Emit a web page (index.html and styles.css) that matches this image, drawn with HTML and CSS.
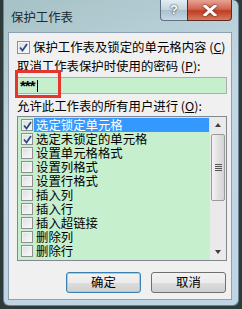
FILE: index.html
```html
<!DOCTYPE html>
<html>
<head>
    <meta charset="UTF-8">
    <title>保护工作表</title>
    <link rel="stylesheet" href="styles.css">
</head>
<body>
    <div class="win">
        <div class="titlebar">
            <span class="title">保护工作表</span>
            <div class="ctrls">
                <span class="btn-help">?</span>
                <span class="btn-close">
                    <svg width="14" height="11" viewBox="0 0 14 11"><path d="M2 1 L12 10 M12 1 L2 10" stroke="#fff" stroke-width="3" stroke-linecap="square"/></svg>
                </span>
            </div>
        </div>
        <div class="client">
            <div class="row first">
                <span class="cb on"><svg width="9" height="9" viewBox="0 0 9 9"><path d="M1 4.5 L3.5 7.5 L8 1" stroke="#2c4b8a" stroke-width="1.8" fill="none"/></svg></span>
                <span>保护工作表及锁定的单元格内容 (<u>C</u>)</span>
            </div>
            <div class="label">取消工作表保护时使用的密码 (<u>P</u>):</div>
            <div class="pwd">***<span class="caret"></span></div>
            <div class="mark"></div>
            <div class="label">允许此工作表的所有用户进行 (<u>O</u>):</div>
            <div class="list">
                <div class="items">
                    <div class="item sel"><span class="cb on"><svg width="9" height="9" viewBox="0 0 9 9"><path d="M1 4.5 L3.5 7.5 L8 1" stroke="#2c4b8a" stroke-width="1.8" fill="none"/></svg></span><span class="txt">选定锁定单元格</span></div>
                    <div class="item"><span class="cb on"><svg width="9" height="9" viewBox="0 0 9 9"><path d="M1 4.5 L3.5 7.5 L8 1" stroke="#2c4b8a" stroke-width="1.8" fill="none"/></svg></span><span class="txt">选定未锁定的单元格</span></div>
                    <div class="item"><span class="cb"></span><span class="txt">设置单元格格式</span></div>
                    <div class="item"><span class="cb"></span><span class="txt">设置列格式</span></div>
                    <div class="item"><span class="cb"></span><span class="txt">设置行格式</span></div>
                    <div class="item"><span class="cb"></span><span class="txt">插入列</span></div>
                    <div class="item"><span class="cb"></span><span class="txt">插入行</span></div>
                    <div class="item"><span class="cb"></span><span class="txt">插入超链接</span></div>
                    <div class="item"><span class="cb"></span><span class="txt">删除列</span></div>
                    <div class="item"><span class="cb"></span><span class="txt">删除行</span></div>
                </div>
                <div class="sbar">
                    <div class="arrow up"></div>
                    <div class="track">
                        <div class="thumb"><i></i><i></i><i></i><i></i></div>
                    </div>
                    <div class="arrow down"></div>
                </div>
            </div>
            <div class="buttons">
                <span class="pb def">确定</span>
                <span class="pb">取消</span>
            </div>
        </div>
    </div>
</body>
</html>
```
FILE: styles.css
```css
* {
    margin: 0;
    padding: 0;
    box-sizing: border-box;
}
body {
    width: 242px;
    height: 309px;
    overflow: hidden;
    background: #2f3b3a;
    font-family: "Noto Sans CJK SC", "Liberation Sans", sans-serif;
    font-size: 12.4px;
    color: #000;
}
u { text-decoration: underline; }

.win {
    margin-left: 3px;
    width: 236px;
    height: 306px;
    border-radius: 0 6px 6px 6px;
    background: linear-gradient(160deg, #a6c2c6 0%, #c3d7e3 40%, #bfd4e4 100%);
    border: 1px solid #6e8494;
    border-top: none;
    padding: 0 6px 0 4px;
    display: flex;
    flex-direction: column;
}
.titlebar {
    height: 32px;
    display: flex;
    flex-shrink: 0;
}
.title {
    padding: 10px 0 0 3px;
    line-height: 14px;
    font-size: 12.4px;
    color: #1b2a33;
}
.ctrls {
    margin-left: auto;
    display: flex;
    height: 21px;
}
.btn-help {
    width: 27px;
    height: 21px;
    border: 1px solid #5d7183;
    border-top: none;
    border-right: none;
    border-radius: 0 0 0 4px;
    background: linear-gradient(#e3edf3, #c2d3de 50%, #aabfcd 51%, #c5d8e4);
    color: #fff;
    font-family: "Liberation Sans", sans-serif;
    font-weight: bold;
    font-size: 13px;
    text-align: center;
    line-height: 19px;
    text-shadow: 0 0 2px #33475a, 0 0 1px #33475a;
}
.btn-close {
    width: 45px;
    height: 21px;
    border: 1px solid #5b2a23;
    border-top: none;
    border-radius: 0 0 4px 0;
    background: linear-gradient(#e8a393, #d0654f 45%, #c13c22 55%, #d77a5e);
    display: flex;
    align-items: center;
    justify-content: center;
}
.btn-close svg { filter: drop-shadow(0 0 1px #4a1a10); }

.client {
    position: relative;
    flex: 1;
    margin-bottom: 5px;
    background: #f0f0f0;
    border: 1px solid #8ea1b2;
    padding: 0 4px 0 8px;
}
.row {
    display: flex;
    align-items: center;
    gap: 3px;
    line-height: 14px;
}
.row.first { margin-top: 7px; }
.cb {
    width: 13px;
    height: 13px;
    flex-shrink: 0;
    border: 1px solid #8f8f8f;
    background: linear-gradient(135deg, #dcdcdc, #fbfbfb);
    box-shadow: inset 0 0 0 1px #f4f4f4;
    display: flex;
    align-items: center;
    justify-content: center;
}
.label {
    line-height: 14px;
    margin-top: 5px;
}
.pwd {
    height: 17px;
    margin-top: 4px;
    border: 1px solid #abadb3;
    background: #c6efce;
    padding-left: 2px;
    font-family: "Liberation Sans", sans-serif;
    font-size: 15px;
    font-weight: bold;
    letter-spacing: -1px;
    line-height: 17px;
    display: flex;
    align-items: center;
}
.caret {
    width: 1px;
    height: 12px;
    background: #000;
    margin-left: 2px;
}
.mark {
    position: absolute;
    left: 6px;
    top: 37px;
    width: 46px;
    height: 28px;
    border: 3px solid #e4352f;
}

.list {
    margin-top: 3px;
    height: 145px;
    border: 1px solid #828790;
    background: #c6efce;
    display: flex;
    overflow: hidden;
}
.items {
    flex: 1;
    padding: 1px 0 0 3px;
}
.item {
    display: flex;
    align-items: center;
    height: 14px;
}
.item .cb {
    width: 12px;
    height: 12px;
}
.item .txt {
    margin-left: 1px;
    padding: 0 2px;
    line-height: 14px;
    flex: 1;
}
.item.sel .txt {
    background: #3399ff;
    color: #fff;
}
.sbar {
    width: 17px;
    display: flex;
    flex-direction: column;
    background: #eaeaea;
    border-left: 1px solid #e0e0e0;
}
.arrow {
    height: 17px;
    display: flex;
    align-items: center;
    justify-content: center;
}
.arrow.up::after {
    content: "";
    border: 3.5px solid transparent;
    border-bottom: 4px solid #404040;
    margin-top: -4px;
}
.arrow.down::after {
    content: "";
    border: 3.5px solid transparent;
    border-top: 4px solid #404040;
    margin-top: 4px;
}
.track { flex: 1; }
.thumb {
    height: 67px;
    margin: 0 1px;
    border: 1px solid #9a9a9a;
    border-radius: 2px;
    background: linear-gradient(90deg, #f3f3f3, #e2e2e2 50%, #d4d4d4);
    display: flex;
    flex-direction: column;
    justify-content: center;
    align-items: center;
    gap: 1px;
}
.thumb i {
    width: 7px;
    height: 1px;
    background: #555;
}

.buttons {
    display: flex;
    justify-content: flex-end;
    gap: 10px;
    margin-top: 11px;
    padding-right: 1px;
}
.pb {
    width: 75px;
    height: 21px;
    border: 1px solid #707070;
    border-radius: 3px;
    background: linear-gradient(#f2f2f2, #ebebeb 50%, #dddddd 51%, #cfcfcf);
    text-align: center;
    line-height: 19px;
}
.pb.def {
    border-color: #3c7fb1;
    box-shadow: inset 0 0 0 1px #8fd3f5;
}
```
